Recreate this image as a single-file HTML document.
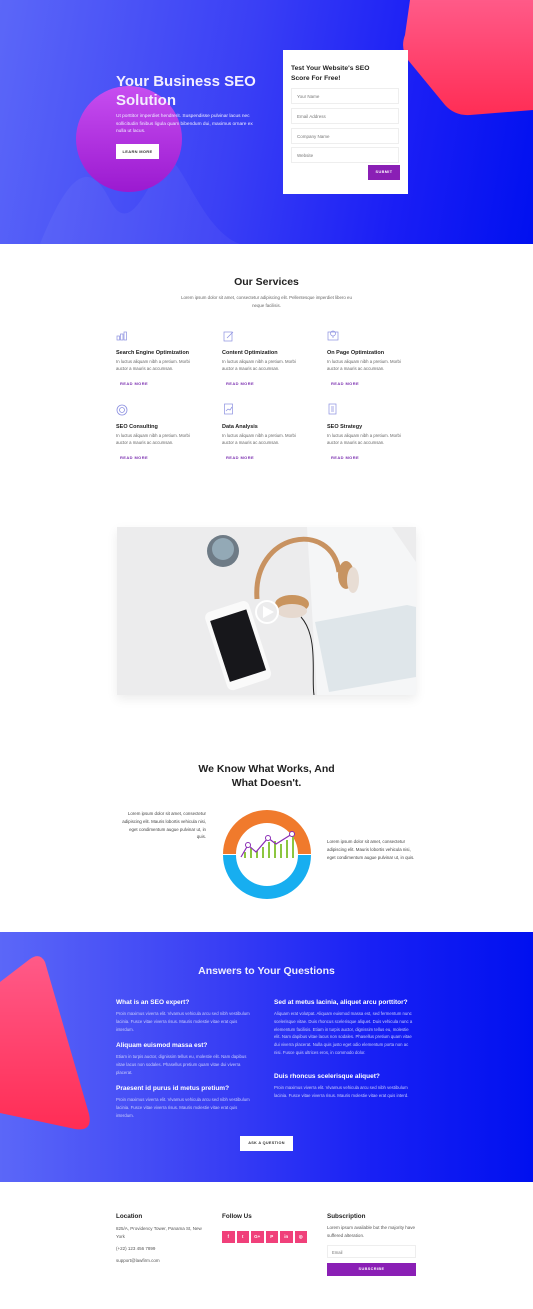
<!DOCTYPE html>
<html><head><meta charset="utf-8">
<style>
*{margin:0;padding:0;box-sizing:border-box}
body{width:533px;height:1309px;position:relative;overflow:hidden;font-family:"Liberation Sans",sans-serif;background:#fff;color:#333}
.a{position:absolute}
.hero{left:0;top:0;width:533px;height:244px;background:linear-gradient(100deg,#5b67f8 0%,#3a3ff5 45%,#1a1ef5 75%,#0010f0 100%);overflow:hidden}
.h1{color:#fff;font-weight:bold;font-size:15px;line-height:19px}
.p{font-size:4.8px;line-height:7.5px}
.card{left:283px;top:50px;width:125px;height:144px;background:#fff}
.inp{position:absolute;left:8px;width:108px;height:16px;border:1px solid #eee;font-size:4.5px;color:#777;padding:5px 5px}
.svc-t{font-size:5.5px;font-weight:bold;color:#222}
.svc-p{font-size:4.3px;line-height:6.5px;color:#666}
.rm{font-size:4px;font-weight:bold;color:#7b2fb0;letter-spacing:.4px}
.faq{left:0;top:932px;width:533px;height:250px;background:linear-gradient(90deg,#5b67f8 0%,#3a40f4 40%,#1820f4 70%,#0010f0 100%);overflow:hidden}
.q{color:#fff;font-size:6.5px;font-weight:bold}
.qa{color:#c9cdfc;font-size:4.3px;line-height:7.8px}
.ft{font-size:6.3px;font-weight:bold;color:#222}
.fp{font-size:4.5px;line-height:7.5px;color:#555}
</style></head><body>
<svg width="0" height="0" style="position:absolute"><defs>
<linearGradient id="cg" x1="0" y1="0" x2="0" y2="1"><stop offset="0" stop-color="#c74ef0"/><stop offset="1" stop-color="#9b1ad0"/></linearGradient>
<linearGradient id="pk" x1="0" y1="0" x2="0" y2="1"><stop offset="0" stop-color="#ff5a88"/><stop offset="1" stop-color="#ff2d55"/></linearGradient>
</defs></svg>
<div class="a hero">
  <svg class="a" style="left:0;top:0" width="533" height="244">
    <path d="M40 244 C70 170 90 160 110 200 C130 240 150 180 165 160 C180 150 200 230 240 244Z" fill="#ffffff" opacity=".05"/>
    <path d="M410 0 L533 0 L533 110 L470 115 Q455 116 445 105 L408 60 Q400 48 405 35 Z" fill="url(#pk)"/>
    <circle cx="129" cy="139" r="53" fill="url(#cg)"/>
  </svg>
  <div class="a h1" style="left:116px;top:72px;width:170px;color:#f3eefe">Your Business SEO Solution</div>
  <div class="a p" style="left:116px;top:113px;width:145px;color:#eef">Ut porttitor imperdiet hendrerit. Suspendisse pulvinar lacus nec sollicitudin finibus ligula quam bibendum dui, maximus ornare ex nulla ut lacus.</div>
  <div class="a" style="left:116px;top:144px;width:43px;height:15px;background:#fff;font-size:4px;font-weight:bold;color:#333;text-align:center;line-height:15px;letter-spacing:.3px">LEARN MORE</div>
  <div class="a card">
    <div class="a" style="left:8px;top:14px;font-size:6.7px;font-weight:bold;line-height:10px;color:#222">Test Your Website's SEO<br>Score For Free!</div>
    <div class="inp" style="top:38px">Your Name</div>
    <div class="inp" style="top:58px">Email Address</div>
    <div class="inp" style="top:78px">Company Name</div>
    <div class="inp" style="top:97px">Website</div>
    <div class="a" style="left:85px;top:115px;width:32px;height:15px;background:#8a1fb5;color:#fff;font-size:3.8px;font-weight:bold;text-align:center;line-height:15px;letter-spacing:.4px">SUBMIT</div>
  </div>
</div>

<div class="a" style="left:0;top:276px;width:533px;text-align:center;font-size:10.5px;font-weight:bold;color:#222">Our Services</div>
<div class="a" style="left:180px;top:294px;width:173px;text-align:center;font-size:4.4px;line-height:7.5px;color:#666">Lorem ipsum dolor sit amet, consectetur adipiscing elit. Pellentesque imperdiet libero eu neque facilisis.</div>

<svg class="a" style="left:116px;top:331px" width="12" height="10"><g fill="none" stroke="#8b8fe0" stroke-width=".7"><rect x="1" y="5" width="2.5" height="4"/><rect x="4.5" y="3" width="2.5" height="6"/><rect x="8" y="1" width="2.5" height="8"/></g></svg>
<svg class="a" style="left:223px;top:330px" width="12" height="12"><g fill="none" stroke="#8b8fe0" stroke-width=".7"><rect x="1" y="2" width="8" height="9"/><path d="M4 8 L10 2"/></g></svg>
<svg class="a" style="left:327px;top:329px" width="12" height="13"><g fill="none" stroke="#8b8fe0" stroke-width=".7"><rect x="1" y="3" width="10" height="8"/><circle cx="6" cy="4.5" r="2.5"/><path d="M6 7v2"/></g></svg>
<svg class="a" style="left:116px;top:404px" width="12" height="12"><g fill="none" stroke="#8b8fe0" stroke-width=".8"><circle cx="6" cy="6" r="5"/><circle cx="6" cy="6" r="2.5"/></g></svg>
<svg class="a" style="left:223px;top:403px" width="12" height="12"><g fill="none" stroke="#8b8fe0" stroke-width=".7"><rect x="1.5" y="1" width="8" height="10"/><path d="M3 8l2-2 2 1 2-3"/></g></svg>
<svg class="a" style="left:327px;top:403px" width="12" height="12"><g fill="none" stroke="#8b8fe0" stroke-width=".7"><rect x="2" y="1" width="7" height="10"/><path d="M4 4h3M4 6h3M4 8h3"/></g></svg>

<div class="a svc-t" style="left:116px;top:350px">Search Engine Optimization</div>
<div class="a svc-t" style="left:222px;top:350px">Content Optimization</div>
<div class="a svc-t" style="left:327px;top:350px">On Page Optimization</div>
<div class="a svc-p" style="left:116px;top:359px;width:82px">In luctus aliquam nibh a pretium. Morbi auctor a mauris ac accumsan.</div>
<div class="a svc-p" style="left:222px;top:359px;width:82px">In luctus aliquam nibh a pretium. Morbi auctor a mauris ac accumsan.</div>
<div class="a svc-p" style="left:327px;top:359px;width:82px">In luctus aliquam nibh a pretium. Morbi auctor a mauris ac accumsan.</div>
<div class="a rm" style="left:120px;top:381px">READ MORE</div>
<div class="a rm" style="left:226px;top:381px">READ MORE</div>
<div class="a rm" style="left:331px;top:381px">READ MORE</div>

<div class="a svc-t" style="left:116px;top:424px">SEO Consulting</div>
<div class="a svc-t" style="left:222px;top:424px">Data Analysis</div>
<div class="a svc-t" style="left:327px;top:424px">SEO Strategy</div>
<div class="a svc-p" style="left:116px;top:433px;width:82px">In luctus aliquam nibh a pretium. Morbi auctor a mauris ac accumsan.</div>
<div class="a svc-p" style="left:222px;top:433px;width:82px">In luctus aliquam nibh a pretium. Morbi auctor a mauris ac accumsan.</div>
<div class="a svc-p" style="left:327px;top:433px;width:82px">In luctus aliquam nibh a pretium. Morbi auctor a mauris ac accumsan.</div>
<div class="a rm" style="left:120px;top:455px">READ MORE</div>
<div class="a rm" style="left:226px;top:455px">READ MORE</div>
<div class="a rm" style="left:331px;top:455px">READ MORE</div>

<svg class="a" style="left:117px;top:527px;box-shadow:0 4px 10px rgba(0,0,0,.08)" width="299" height="168">
  <rect width="299" height="168" fill="#ececed"/>
  <path d="M190 0 L275 0 L299 35 L299 168 L200 168 Z" fill="#f5f6f7"/>
  <path d="M198 95 L290 78 L299 80 L299 150 L212 165 Z" fill="#dfe6ea"/>
  <circle cx="106" cy="24" r="16" fill="#6e7b86"/>
  <circle cx="106" cy="22" r="11" fill="#93a9b6"/>
  <path d="M140 72 C135 5 215 -8 222 45" fill="none" stroke="#c89260" stroke-width="5"/>
  <ellipse cx="229" cy="48" rx="8" ry="14" fill="#c79462"/>
  <ellipse cx="236" cy="53" rx="6" ry="13" fill="#e8ddd4"/>
  <ellipse cx="175" cy="77" rx="17" ry="9" fill="#c9945e"/>
  <ellipse cx="175" cy="84" rx="15" ry="7" fill="#e6d9cf"/>
  <path d="M184 90 C202 110 194 150 197 168" fill="none" stroke="#222" stroke-width="1"/>
  <g transform="rotate(-18 123 118)"><rect x="98" y="77" width="46" height="82" rx="6" fill="#fafafa"/><rect x="102" y="86" width="38" height="64" fill="#17171b"/></g>
  <circle cx="150" cy="85" r="11" fill="none" stroke="#fff" stroke-width="2"/>
  <path d="M146 79 L157 85 L146 91Z" fill="#fff"/>
</svg>

<div class="a" style="left:0;top:762px;width:533px;text-align:center;font-size:10.5px;font-weight:bold;line-height:14px;color:#222">We Know What Works, And<br>What Doesn't.</div>
<div class="a" style="left:120px;top:810px;width:86px;text-align:right;font-size:4.4px;line-height:7.8px;color:#444">Lorem ipsum dolor sit amet, consectetur adipiscing elit. Mauris lobortis vehicula nisi, eget condimentum augue pulvinar ut, in quis.</div>
<div class="a" style="left:327px;top:838px;width:92px;font-size:4.4px;line-height:7.8px;color:#444">Lorem ipsum dolor sit amet, consectetur adipiscing elit. Mauris lobortis vehicula nisi, eget condimentum augue pulvinar ut, in quis.</div>
<svg class="a" style="left:220px;top:808px" width="95" height="92">
  <path d="M3 46 A44 44 0 0 1 91 46 L78 46 A31 31 0 0 0 16 46Z" fill="#f07a2c"/>
  <path d="M3 47 A44 44 0 0 0 91 47 L78 47 A31 31 0 0 1 16 47Z" fill="#17aef0"/>
  <g fill="#8cc63f"><rect x="24" y="44" width="2" height="6"/><rect x="30" y="40" width="2" height="10"/><rect x="36" y="43" width="2" height="7"/><rect x="42" y="39" width="2" height="11"/><rect x="48" y="34" width="2" height="16"/><rect x="54" y="33" width="2" height="17"/><rect x="60" y="36" width="2" height="14"/><rect x="66" y="32" width="2" height="18"/><rect x="72" y="28" width="2" height="22"/></g>
  <path d="M21 49 L28 37 L36 44 L48 30 L56 36 L72 26" fill="none" stroke="#8a2db5" stroke-width="1.2"/>
  <g fill="#fff" stroke="#8a2db5" stroke-width="1"><circle cx="28" cy="37" r="2.5"/><circle cx="48" cy="30" r="2.5"/><circle cx="72" cy="26" r="2.5"/></g>
</svg>

<div class="a faq">
  <svg class="a" style="left:0;top:0" width="100" height="210"><path d="M0 50 L30 27 Q40 20 45 30 L89 182 Q93 200 75 197 L0 181Z" fill="url(#pk)"/></svg>
  <div class="a" style="left:0;top:33px;width:533px;text-align:center;color:#fff;font-size:10.5px;font-weight:bold;opacity:.92">Answers to Your Questions</div>
  <div class="a q" style="left:116px;top:67px">What is an SEO expert?</div>
  <div class="a qa" style="left:116px;top:78px;width:140px">Proin maximus viverra elit. Vivamus vehicula arcu sed nibh vestibulum lacinia. Fusce vitae viverra risus. Mauris molestie vitae erat quis interdum.</div>
  <div class="a q" style="left:116px;top:110px">Aliquam euismod massa est?</div>
  <div class="a qa" style="left:116px;top:121px;width:140px">Etiam in turpis auctor, dignissim tellus eu, molestie elit. Nam dapibus vitae lacus non sodales. Phasellus pretium quam vitae dui viverra placerat.</div>
  <div class="a q" style="left:116px;top:153px">Praesent id purus id metus pretium?</div>
  <div class="a qa" style="left:116px;top:164px;width:140px">Proin maximus viverra elit. Vivamus vehicula arcu sed nibh vestibulum lacinia. Fusce vitae viverra risus. Mauris molestie vitae erat quis interdum.</div>
  <div class="a q" style="left:274px;top:67px">Sed at metus lacinia, aliquet arcu porttitor?</div>
  <div class="a qa" style="left:274px;top:78px;width:140px">Aliquam erat volutpat. Aliquam euismod massa est, sed fermentum nunc scelerisque vitae. Duis rhoncus scelerisque aliquet. Duis vehicula nunc a elementum facilisis. Etiam in turpis auctor, dignissim tellus eu, molestie elit. Nam dapibus vitae lacus non sodales. Phasellus pretium quam vitae dui viverra placerat. Nulla quis justo eget odio elementum porta non ac nisi. Fusce quis ultrices eros, in commodo dolor.</div>
  <div class="a q" style="left:274px;top:141px">Duis rhoncus scelerisque aliquet?</div>
  <div class="a qa" style="left:274px;top:152px;width:140px">Proin maximus viverra elit. Vivamus vehicula arcu sed nibh vestibulum lacinia. Fusce vitae viverra risus. Mauris molestie vitae erat quis interd.</div>
  <div class="a" style="left:240px;top:204px;width:53px;height:15px;background:#fff;font-size:3.8px;font-weight:bold;color:#333;text-align:center;line-height:15px;letter-spacing:.3px">ASK A QUESTION</div>
</div>

<div class="a ft" style="left:116px;top:1213px">Location</div>
<div class="a fp" style="left:116px;top:1225px;width:90px">825/A, Providency Tower, Panama St, New York</div>
<div class="a fp" style="left:116px;top:1245px">(+22) 123 456 7899</div>
<div class="a fp" style="left:116px;top:1257px">support@lawfirm.com</div>
<div class="a ft" style="left:222px;top:1213px">Follow Us</div>
<div class="a" style="left:222px;top:1231px;display:flex;gap:2px">
  <div style="width:12.5px;height:12px;background:#f0407a;color:#fff;font-size:4.5px;font-weight:bold;text-align:center;line-height:12px">f</div>
  <div style="width:12.5px;height:12px;background:#f0407a;color:#fff;font-size:4.5px;font-weight:bold;text-align:center;line-height:12px">t</div>
  <div style="width:12.5px;height:12px;background:#f0407a;color:#fff;font-size:4.5px;font-weight:bold;text-align:center;line-height:12px">G+</div>
  <div style="width:12.5px;height:12px;background:#f0407a;color:#fff;font-size:4.5px;font-weight:bold;text-align:center;line-height:12px">P</div>
  <div style="width:12.5px;height:12px;background:#f0407a;color:#fff;font-size:4.5px;font-weight:bold;text-align:center;line-height:12px">in</div>
  <div style="width:12.5px;height:12px;background:#f0407a;color:#fff;font-size:4.5px;font-weight:bold;text-align:center;line-height:12px">◎</div>
</div>
<div class="a ft" style="left:327px;top:1213px">Subscription</div>
<div class="a fp" style="left:327px;top:1224px;width:92px">Lorem ipsum available but the majority have suffered alteration.</div>
<div class="a" style="left:327px;top:1245px;width:89px;height:13px;border:1px solid #eee;font-size:4.2px;color:#777;padding:4px 4px">Email</div>
<div class="a" style="left:327px;top:1263px;width:89px;height:13px;background:#8a1fb5;color:#fff;font-size:3.8px;font-weight:bold;text-align:center;line-height:13px;letter-spacing:.4px">SUBSCRIBE</div>
</body></html>
